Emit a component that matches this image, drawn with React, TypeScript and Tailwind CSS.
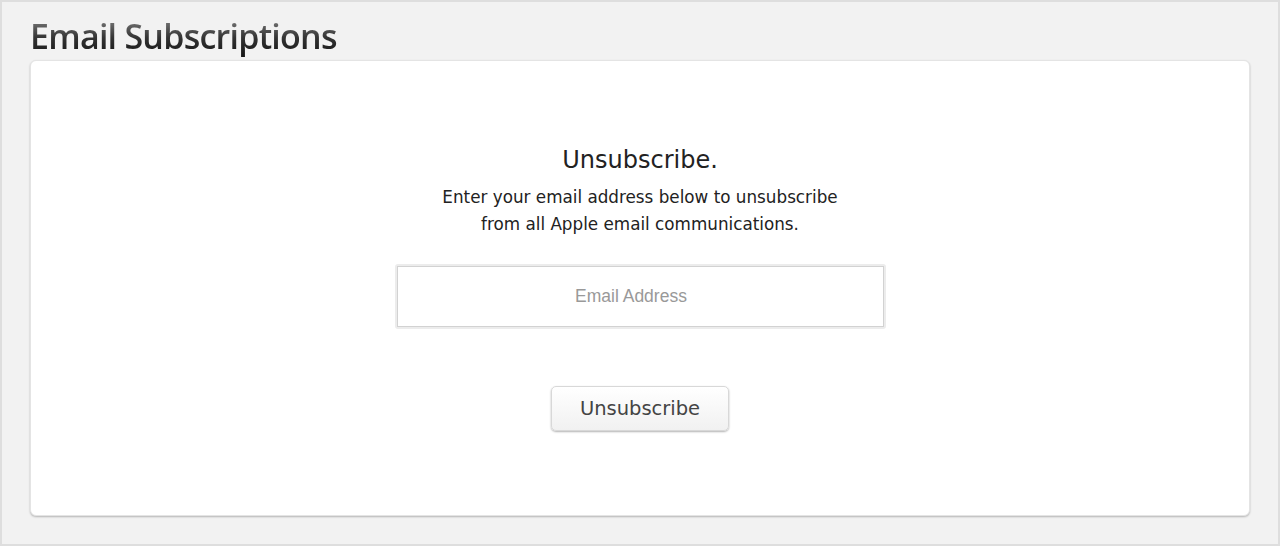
export default function App() {
  return (
    <div className="w-[1280px] h-[546px] bg-[#f2f2f2] border-2 border-[#dedede] box-border flex flex-col px-[28px]">
      {/* Page title */}
      <h1
        className="mt-[14px] h-[44px] text-[34px] leading-[40px] font-semibold tracking-[-0.75px] bg-gradient-to-b from-[#888] via-[#333] to-[#111] bg-clip-text text-transparent"
        style={{ fontFamily: '"Open Sans", "Liberation Sans", sans-serif' }}
      >
        Email Subscriptions
      </h1>

      {/* Card */}
      <div className="h-[456px] bg-white rounded-[6px] border border-[#e4e4e4] shadow-[0_1px_2px_rgba(0,0,0,0.25)] flex flex-col items-center pt-[84px]"
        style={{ fontFamily: '"DejaVu Sans", "Liberation Sans", sans-serif' }}
      >
        <h2 className="text-[24px] leading-[30px] text-[#222]">Unsubscribe.</h2>
        <p className="mt-[9px] text-[16.8px] leading-[27px] text-[#222] text-center">
          Enter your email address below to unsubscribe
          <br />
          from all Apple email communications.
        </p>

        <div className="mt-[26px] p-[2px] bg-[#ececec] rounded-[3px]">
          <input
            type="text"
            placeholder="Email Address"
            className="w-[487px] h-[61px] bg-white border border-[#d2d2d2] text-center pr-[18px] text-[17.5px] text-[#333] placeholder:text-[#999] outline-none"
            style={{ fontFamily: '"Liberation Sans", Arial, sans-serif' }}
          />
        </div>

        <button className="mt-[57px] w-[178px] h-[45px] rounded-[5px] border border-[#d8d8d8] bg-gradient-to-b from-white to-[#f1f1f1] shadow-[0_1px_2px_rgba(0,0,0,0.3)] text-[19.5px] text-[#444]">
          Unsubscribe
        </button>
      </div>
    </div>
  );
}
